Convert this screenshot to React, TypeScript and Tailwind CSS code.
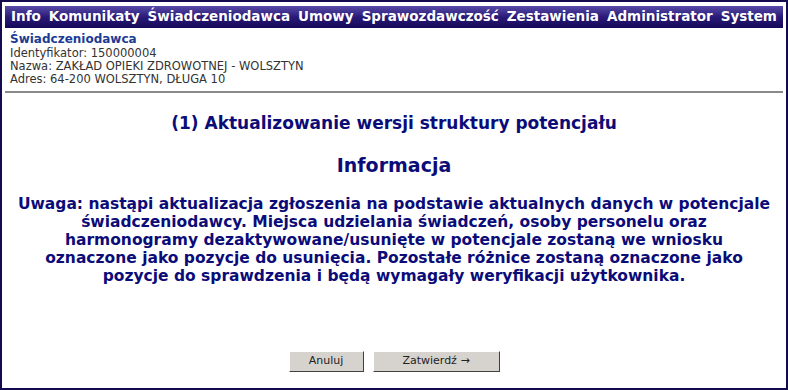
import React from "react";

const menu = [
  "Info",
  "Komunikaty",
  "Świadczeniodawca",
  "Umowy",
  "Sprawozdawczość",
  "Zestawienia",
  "Administrator",
  "System",
];

const lines = [
  "Uwaga: nastąpi aktualizacja zgłoszenia na podstawie aktualnych danych w potencjale",
  "świadczeniodawcy. Miejsca udzielania świadczeń, osoby personelu oraz",
  "harmonogramy dezaktywowane/usunięte w potencjale zostaną we wniosku",
  "oznaczone jako pozycje do usunięcia. Pozostałe różnice zostaną oznaczone jako",
  "pozycje do sprawdzenia i będą wymagały weryfikacji użytkownika.",
];

export default function App() {
  return (
    <div
      className="w-[788px] h-[390px] bg-white border-2 border-[#140a50] flex flex-col"
      style={{ fontFamily: '"DejaVu Sans", Verdana, sans-serif' }}
    >
      <div className="mx-[3px] mt-[4px] h-[22px] flex items-center justify-between pl-[6px] pr-[6px] bg-gradient-to-b from-[#5a4aa8] via-[#2a1a78] to-[#140858]">
        {menu.map((m) => (
          <span key={m} className="text-white font-bold text-[13.5px] leading-none">
            {m}
          </span>
        ))}
      </div>

      <div className="px-[5px] pt-[4px] pb-[5px] border-b-2 border-[#8a8a8a] mx-[3px]">
        <div className="text-[#1c3c94] font-bold text-[12px] leading-[15px]">Świadczeniodawca</div>
        <div className="text-[#333] text-[11.5px] leading-[13px]">Identyfikator: 150000004</div>
        <div className="text-[#333] text-[11.5px] leading-[13px]">Nazwa: ZAKŁAD OPIEKI ZDROWOTNEJ - WOLSZTYN</div>
        <div className="text-[#333] text-[11.5px] leading-[13px]">Adres: 64-200 WOLSZTYN, DŁUGA 10</div>
      </div>

      <div className="flex flex-col items-center text-[#0c0c78] font-bold">
        <div className="mt-[20px] text-[17px] leading-[20px]">(1) Aktualizowanie wersji struktury potencjału</div>
        <div className="mt-[21px] text-[19px] leading-[22px]">Informacja</div>
        <div className="mt-[19px] text-center text-[15.5px] leading-[18px]">
          {lines.map((l) => (
            <div key={l} className="whitespace-nowrap">
              {l}
            </div>
          ))}
        </div>
      </div>

      <div className="mt-auto mb-[16px] flex justify-center gap-[9px]">
        <button className="w-[75px] h-[21px] bg-[#d6d3ce] text-[11px] text-[#222] border border-t-white border-l-white border-r-[#404040] border-b-[#404040]">
          Anuluj
        </button>
        <button className="w-[127px] h-[21px] bg-[#d6d3ce] text-[11px] text-[#222] border border-t-white border-l-white border-r-[#404040] border-b-[#404040]">
          Zatwierdź →
        </button>
      </div>
    </div>
  );
}
